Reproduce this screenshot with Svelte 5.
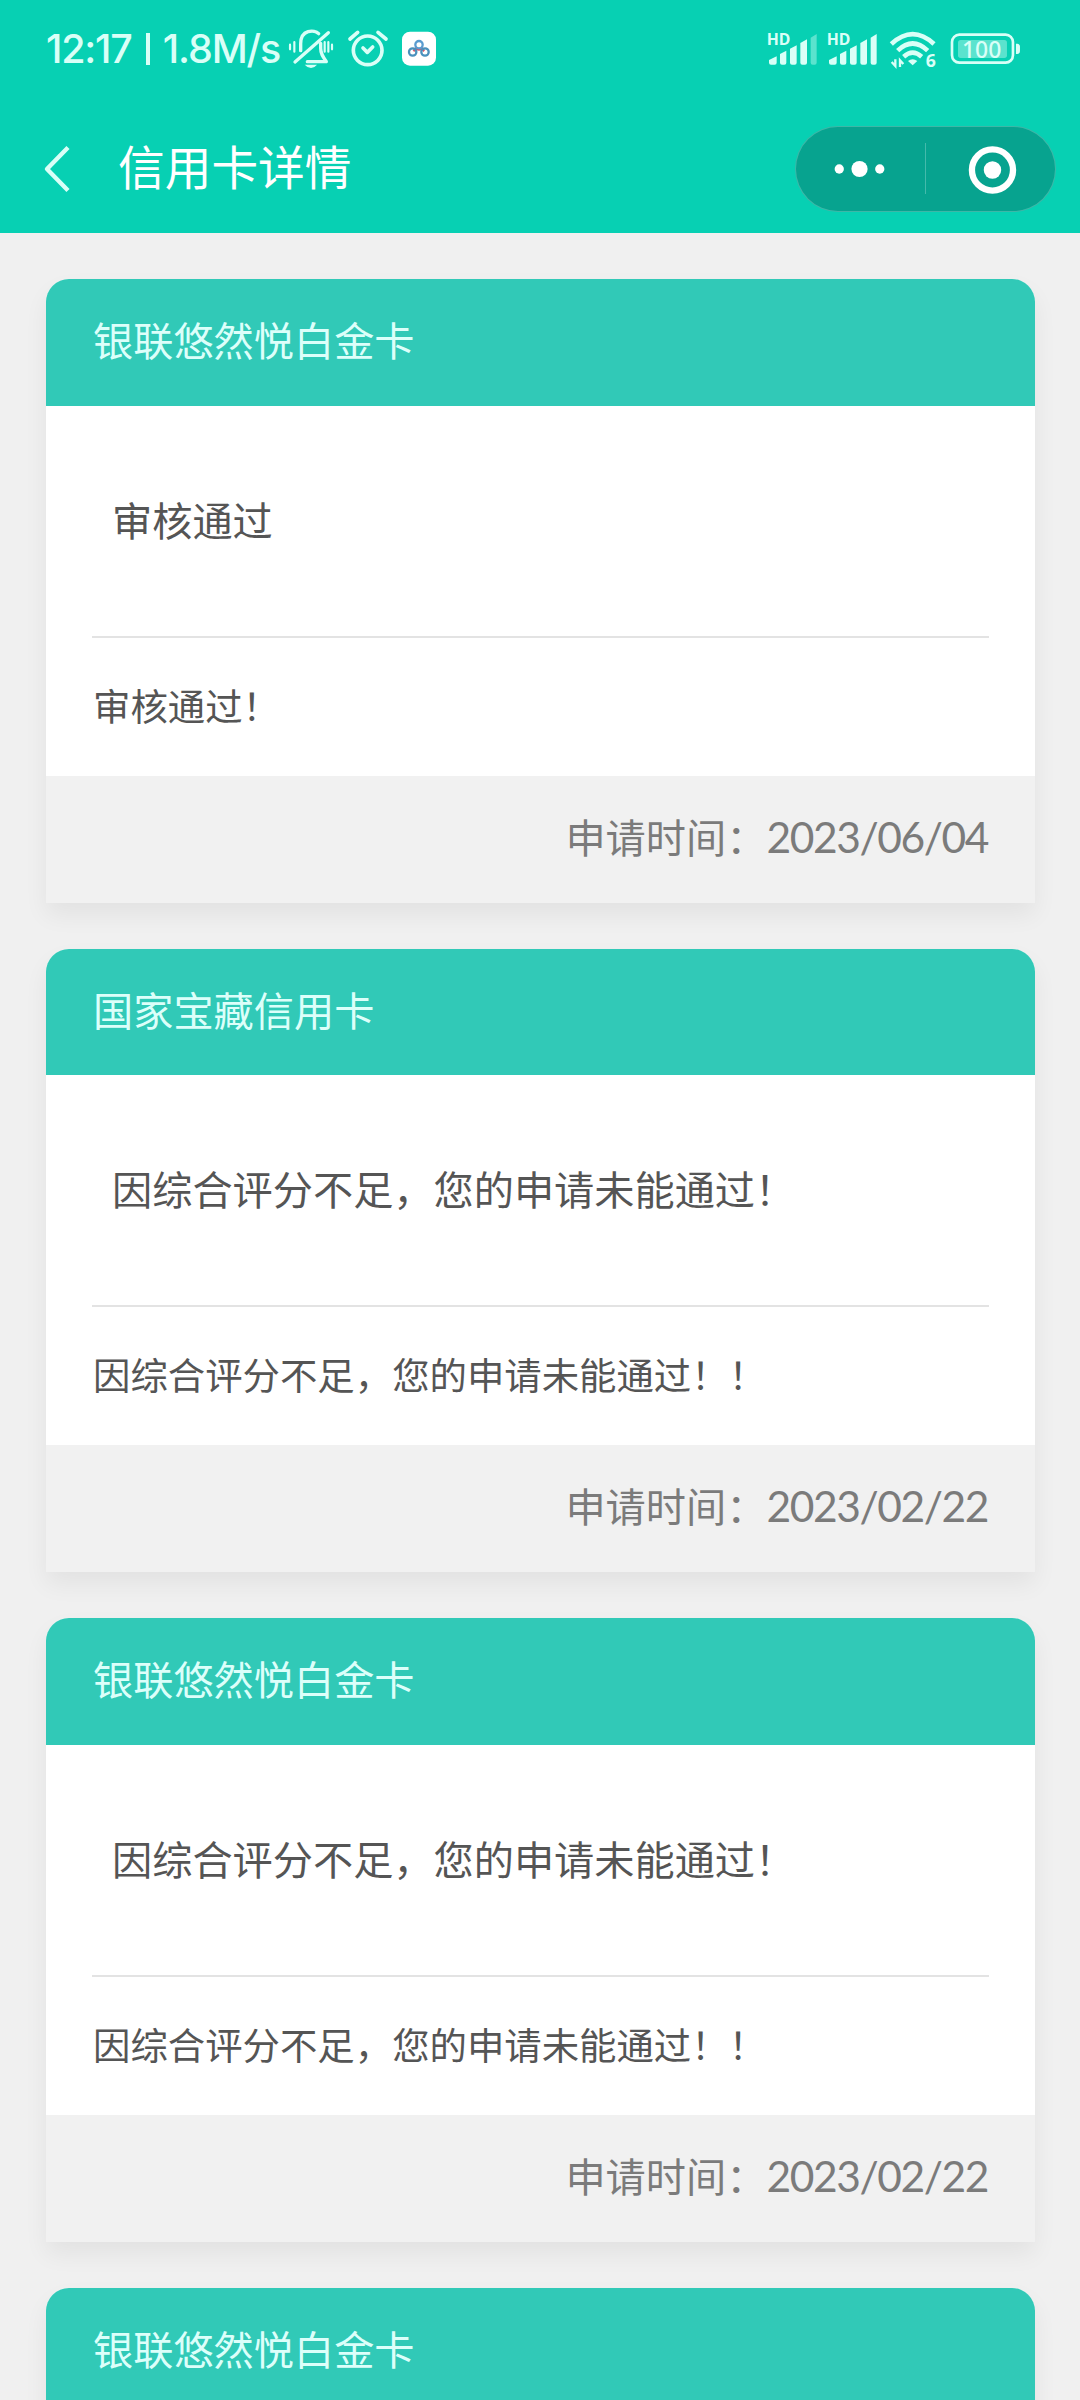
<script lang="ts">
	const cards = [
		{ name: '银联悠然悦白金卡', status: '审核通过', remark: '审核通过！', date: '2023/06/04' },
		{ name: '国家宝藏信用卡', status: '因综合评分不足，您的申请未能通过！', remark: '因综合评分不足，您的申请未能通过！！', date: '2023/02/22' },
		{ name: '银联悠然悦白金卡', status: '因综合评分不足，您的申请未能通过！', remark: '因综合评分不足，您的申请未能通过！！', date: '2023/02/22' },
		{ name: '银联悠然悦白金卡' },
	]
</script>

{#snippet signal(weak: boolean)}
	<svg class="signal" viewBox="48 46 156 114">
		<text x="50" y="90" font-size="47" font-weight="700" textLength="71" lengthAdjust="spacingAndGlyphs">HD</text>
		<path d="M57 136l23-11v19q0 6-6 6H63q-6 0-6-6z" />
		<path d="M90 118l19-10v36q0 6-6 6h-7q-6 0-6-6z" />
		<path d="M120 102l20-10v52q0 6-6 6h-8q-6 0-6-6z" />
		<path d="M151 85l20-11v70q0 6-6 6h-8q-6 0-6-6z" />
		<path d="M182 69l18-11v86q0 6-6 6h-6q-6 0-6-6z" opacity={weak ? 0.4 : 1} />
	</svg>
{/snippet}

<div class="page">
	<header>
		<div class="status-bar">
			<div class="clock">
				<span>12:17</span>
				<i></i>
				<span class="speed">1.8M/s</span>
			</div>
			<!-- muted bell -->
			<svg class="bell" viewBox="774 46 140 114" fill="none" stroke="#d9fff7" stroke-width="10" stroke-linecap="round">
				<path d="M812 108V87C812 44 853 44 866 57" />
				<path d="M872 86v15c0 17 7 26 17 40H832" stroke-linejoin="round" />
				<path d="M895 54L795 142" />
				<path d="M780 90v14M793 82v29M884 82v29M895 82v29M906 90v14" stroke-width="6.5" />
				<path d="M824 150h37q-8 10-18 10t-19-10z" fill="#d9fff7" stroke="none" />
			</svg>
			<!-- alarm -->
			<svg class="alarm" viewBox="950 46 126 114" fill="none" stroke="#d9fff7" stroke-width="11" stroke-linecap="round" stroke-linejoin="round">
				<circle cx="1012" cy="107" r="43" />
				<path d="M998 100l13 13 16-16M959 73l23-20M1067 73l-24-20" />
			</svg>
			<!-- cloud drive notification -->
			<svg class="drive" viewBox="1116 46 102 114" fill="none" stroke-width="7">
				<rect x="1116" y="51" width="102" height="102" rx="24" fill="#fff" />
				<path d="M1155 99q12 11 24 0M1157 103l-7 6M1176 103l7 6" stroke="#d65569" />
				<circle cx="1148" cy="112" r="11" stroke="#4a91bd" />
				<circle cx="1185" cy="112" r="11" stroke="#4a91bd" />
				<circle cx="1167" cy="90" r="11" stroke="#5a9cd0" />
			</svg>

			<div class="right">
				{@render signal(true)}
				{@render signal(false)}
				<svg class="wifi" viewBox="414 46 150 114" fill="none" stroke="#d9fff7" stroke-width="14">
					<path d="M424 88Q488 29 552 88" />
					<path d="M443 108Q488 65 533 108" />
					<path d="M461 126Q488 102 515 126" />
					<path d="M474 139q14-10 28 0l-14 13z" fill="#d9fff7" stroke="none" />
					<path d="M436 134v20l-11-12M450 157v-20l10 11" stroke-width="7" />
					<text x="527" y="157" font-size="53" font-weight="700" stroke="none">6</text>
				</svg>
				<svg class="battery" viewBox="600 46 214 114">
					<rect x="606" y="60" width="183" height="84" rx="22" fill="none" stroke="#d9fff7" stroke-width="8" />
					<rect x="624" y="76" width="147" height="54" rx="8" opacity=".4" />
					<path d="M798 87h4q8 1 8 9v13q0 8-8 9h-4z" />
					<text x="636" y="130" font-size="73" font-weight="500" textLength="118" lengthAdjust="spacingAndGlyphs">100</text>
				</svg>
			</div>
		</div>

		<div class="nav">
			<svg class="back" viewBox="0 0 28 48" fill="none" stroke="#d9fff7" stroke-width="4.4" stroke-linejoin="round">
				<path d="M25 2.5L4 24l21 21.5" />
			</svg>
			<h1>信用卡详情</h1>
			<div class="capsule">
				<svg viewBox="0 0 130 85">
					<circle cx="43.5" cy="42.5" r="4.7" />
					<circle cx="64" cy="42.5" r="8.2" />
					<circle cx="84.5" cy="42.5" r="4.7" />
				</svg>
				<i></i>
				<svg viewBox="0 0 130 85">
					<circle cx="67" cy="43.5" r="20.8" fill="none" stroke="#fff" stroke-width="6.4" />
					<circle cx="67" cy="43.5" r="8.8" />
				</svg>
			</div>
		</div>
	</header>

	<main>
		{#each cards as card}
			<article>
				<h2>{card.name}</h2>
				{#if card.status}
					<div class="body">
						<p class="status">{card.status}</p>
						<p class="remark">{card.remark}</p>
					</div>
					<footer>申请时间：<span class="date">{card.date}</span></footer>
				{/if}
			</article>
		{/each}
	</main>
</div>

<style>
	:global(body) {
		background: #f0f0f0;
	}

	.page {
		height: 2400px;
		overflow: hidden;
		background: #f0f0f0;
		font-family: "Noto Sans CJK SC", sans-serif;
	}

	h1, h2, p {
		margin: 0;
		font-weight: 400;
	}

	header {
		height: 233px;
		background: #07d0b3;
	}

	.status-bar {
		display: flex;
		align-items: center;
		box-sizing: border-box;
		height: 98.6px;
		padding: 0 58.6px 0 46px;
	}

	.status-bar svg {
		height: 38px;
		flex: none;
		overflow: visible;
		fill: #d9fff7;
		font-family: "Noto Sans", sans-serif;
	}

	.clock {
		display: flex;
		align-items: center;
		width: 242px;
		height: 50px;
		color: #d9fff7;
		font: 500 39.5px/50px Inter, "Noto Sans", sans-serif;
		letter-spacing: -1.2px;
		white-space: nowrap;
	}

	.clock i {
		width: 4px;
		height: 32px;
		margin: 0 13px 0 14px;
		background: #d9fff7;
	}

	.clock .speed {
		letter-spacing: -1.1px;
	}

	.status-bar .bell {
		width: 46.7px;
		fill: none;
	}

	.status-bar .alarm {
		width: 42px;
		margin-left: 12px;
		fill: none;
	}

	.status-bar .drive {
		width: 34px;
		margin-left: 13.3px;
		fill: none;
	}

	.right {
		display: flex;
		margin-left: auto;
	}

	.signal {
		width: 52px;
		margin-right: 8px;
	}

	.wifi {
		width: 50px;
		margin: 0 12px 0 2px;
	}

	.wifi path:not([fill]) {
		fill: none;
	}

	.battery {
		width: 71.3px;
	}

	.nav {
		display: flex;
		align-items: center;
		height: 140px;
		padding: 0 24px 0 43px;
		box-sizing: border-box;
	}

	.back {
		width: 28px;
		height: 48px;
	}

	h1 {
		margin-left: 47px;
		color: #fff;
		font-size: 46.7px;
		line-height: 66px;
		padding-bottom: 8px;
	}

	.capsule {
		display: flex;
		align-items: center;
		box-sizing: border-box;
		width: 261px;
		height: 86px;
		margin-left: auto;
		border: 1px solid rgba(255, 255, 255, 0.22);
		border-radius: 43px;
		background: #07a38f;
	}

	.capsule svg {
		width: 129px;
		height: 84px;
		fill: #fff;
	}

	.capsule i {
		width: 1px;
		height: 51px;
		background: rgba(255, 255, 255, 0.25);
	}

	main {
		padding: 46px 45px 0 46px;
	}

	article {
		margin-bottom: 46.08px;
		border-radius: 23px 23px 0 0;
		background: #fff;
		box-shadow: 0 12px 24px rgba(0, 0, 0, 0.06);
	}

	h2 {
		height: 126.72px;
		padding: 0 47px;
		border-radius: 23px 23px 0 0;
		background: #31c9b7;
		color: #dcfffa;
		font-size: 40.2px;
		line-height: 119px;
		box-sizing: border-box;
	}

	.body {
		height: 370.08px;
		padding: 0 46px;
		box-sizing: border-box;
		color: #555;
	}

	.status {
		height: 230px;
		padding-left: 20px;
		border-bottom: 2px solid #e3e3e3;
		font-size: 40.2px;
		line-height: 225px;
	}

	.remark {
		padding-left: 1px;
		font-size: 37.4px;
		line-height: 134px;
	}

	footer {
		height: 126.72px;
		padding-right: 47px;
		box-sizing: border-box;
		background: #f1f1f1;
		color: #7b7b7b;
		font-size: 40.2px;
		line-height: 120px;
		text-align: right;
	}

	.date {
		font-family: Lato, sans-serif;
		font-size: 42.5px;
		line-height: 1;
		letter-spacing: -1.4px;
	}
</style>
